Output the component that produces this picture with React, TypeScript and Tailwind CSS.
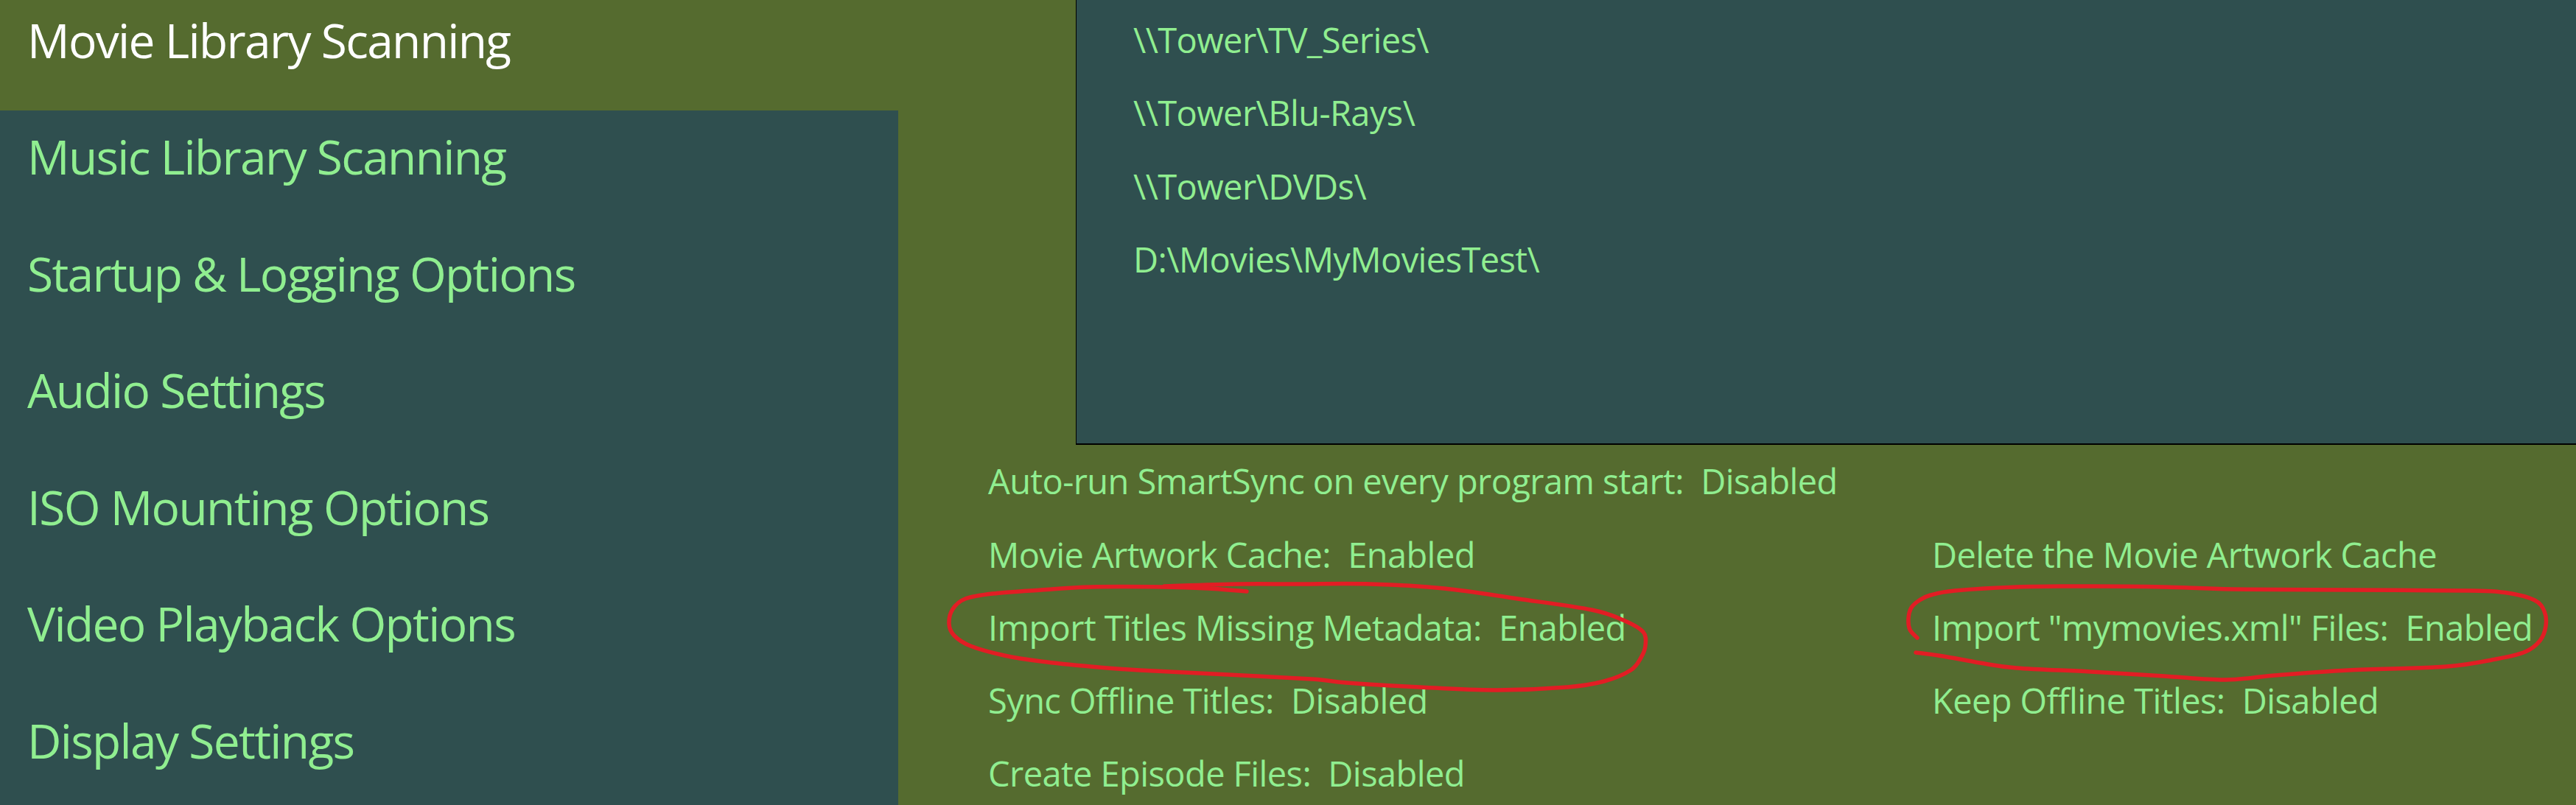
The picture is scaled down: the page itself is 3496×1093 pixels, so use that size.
import React from "react";

type P = [number, number];

function smooth(pts: P[]): string {
  let d = `M${pts[0][0]},${pts[0][1]}`;
  for (let i = 0; i < pts.length - 1; i++) {
    const p0 = pts[i - 1] || pts[i];
    const p1 = pts[i];
    const p2 = pts[i + 1];
    const p3 = pts[i + 2] || p2;
    const c1x = p1[0] + (p2[0] - p0[0]) / 6;
    const c1y = p1[1] + (p2[1] - p0[1]) / 6;
    const c2x = p2[0] - (p3[0] - p1[0]) / 6;
    const c2y = p2[1] - (p3[1] - p1[1]) / 6;
    d += ` C${c1x.toFixed(1)},${c1y.toFixed(1)} ${c2x.toFixed(1)},${c2y.toFixed(1)} ${p2[0]},${p2[1]}`;
  }
  return d;
}

const leftLoop: P[] = [
  [1692, 803], [1640, 799], [1580, 797], [1480, 797], [1413, 801], [1347, 806], [1310, 813],
  [1293, 827], [1288, 847], [1295, 863], [1317, 877], [1363, 890], [1413, 898], [1480, 905],
  [1547, 910], [1647, 915], [1780, 922], [1827, 927], [1927, 933], [2027, 937], [2127, 933],
  [2177, 925], [2213, 910], [2227, 893], [2233, 877], [2230, 858], [2203, 842], [2160, 828],
  [2060, 813], [1960, 799], [1860, 793], [1760, 793], [1680, 793], [1580, 796],
];

const rightLoop: P[] = [
  [2602, 866], [2592, 855], [2590, 840], [2594, 825], [2605, 815], [2620, 808], [2653, 802],
  [2737, 797], [2837, 796], [2937, 797], [3030, 800], [3187, 801], [3353, 802], [3403, 805],
  [3440, 815], [3453, 830], [3455, 850], [3447, 870], [3427, 885], [3387, 895], [3320, 905],
  [3187, 910], [3087, 917], [3020, 923], [2937, 918], [2837, 912], [2737, 907], [2687, 900],
  [2637, 891], [2600, 886],
];

const menu = [
  "Movie Library Scanning",
  "Music Library Scanning",
  "Startup & Logging Options",
  "Audio Settings",
  "ISO Mounting Options",
  "Video Playback Options",
  "Display Settings",
];

const paths = [
  "\\\\Tower\\TV_Series\\",
  "\\\\Tower\\Blu-Rays\\",
  "\\\\Tower\\DVDs\\",
  "D:\\Movies\\MyMoviesTest\\",
];

const rows: [string, string][] = [
  ["Auto-run SmartSync on every program start:  Disabled", ""],
  ["Movie Artwork Cache:  Enabled", "Delete the Movie Artwork Cache"],
  ["Import Titles Missing Metadata:  Enabled", "Import \"mymovies.xml\" Files:  Enabled"],
  ["Sync Offline Titles:  Disabled", "Keep Offline Titles:  Disabled"],
  ["Create Episode Files:  Disabled", ""],
];

export default function App() {
  return (
    <div className="relative flex h-[1093px] w-[3496px] overflow-hidden bg-[#556b2f] font-['Open_Sans','Noto_Sans',sans-serif] text-[#90ee90]">
      {/* Sidebar */}
      <div className="flex w-[1219px] shrink-0 flex-col">
        <div className="-mt-[8.5px] flex flex-1 flex-col bg-[#2f4f4f]">
          {menu.map((m, i) => (
            <div
              key={m}
              className={
                i === 0
                  ? "h-[158.5px] shrink-0 bg-[#556b2f] pl-[37px] pt-[23px] text-[64px] leading-[80px] tracking-[-0.026em] text-white whitespace-pre"
                  : "h-[158.5px] shrink-0 pl-[37px] pt-[23px] text-[64px] leading-[80px] tracking-[-0.026em] whitespace-pre"
              }
            >
              {m}
            </div>
          ))}
        </div>
      </div>

      {/* Main */}
      <div className="flex min-w-0 flex-1 flex-col tracking-[-0.037em]">
        <div className="ml-[241px] h-[604px] shrink-0 border-b-2 border-l border-black bg-[#2f4f4f] pl-[77px] pt-[4px]">
          {paths.map((p) => (
            <div key={p} className="flex h-[99.5px] items-center text-[47px] whitespace-pre">
              {p}
            </div>
          ))}
        </div>
        <div className="grid grid-cols-[1281px_1fr] pl-[122px]">
          {rows.map(([a, b], i) => (
            <React.Fragment key={i}>
              <div className="flex h-[99.25px] items-center text-[47px] whitespace-pre">{a}</div>
              <div className="flex h-[99.25px] items-center text-[47px] whitespace-pre">{b}</div>
            </React.Fragment>
          ))}
        </div>
      </div>

      {/* Hand-drawn annotation overlay */}
      <svg
        className="pointer-events-none absolute left-0 top-0"
        width={3496}
        height={1093}
        viewBox="0 0 3496 1093"
      >
        <path d={smooth(leftLoop)} fill="none" stroke="#e21d24" strokeWidth={5.5} strokeLinecap="round" strokeLinejoin="round" />
        <path d={smooth(rightLoop)} fill="none" stroke="#e21d24" strokeWidth={5.5} strokeLinecap="round" strokeLinejoin="round" />
      </svg>
    </div>
  );
}
